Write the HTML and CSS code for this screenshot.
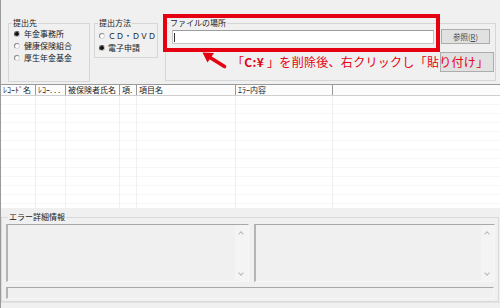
FILE: index.html
```html
<!DOCTYPE html>
<html lang="ja">
<head>
<meta charset="utf-8">
<link rel="stylesheet" href="styles.css">
</head>
<body>
<div class="win">
  <div class="top">
    <fieldset class="grp grp-dest">
      <legend>提出先</legend>
      <div class="opt"><span class="radio on"></span>年金事務所</div>
      <div class="opt"><span class="radio"></span>健康保険組合</div>
      <div class="opt"><span class="radio"></span>厚生年金基金</div>
    </fieldset>
    <fieldset class="grp grp-method">
      <legend>提出方法</legend>
      <div class="opt"><span class="radio"></span>ＣＤ・ＤＶＤ</div>
      <div class="opt"><span class="radio on"></span>電子申請</div>
    </fieldset>
    <fieldset class="grp grp-file">
      <legend>ファイルの場所</legend>
      <div class="file-row">
        <div class="input"><span class="caret"></span></div>
        <div class="btn btn-ref">参照(<u>R</u>)</div>
      </div>
      <div class="btn btn-paste"></div>
    </fieldset>
    <div class="hl-box"></div>
    <svg class="arrow" width="36" height="24" viewBox="0 0 36 24">
      <line x1="28.5" y1="18.5" x2="14" y2="9.5" stroke="#e50012" stroke-width="3.6" stroke-linecap="round"/>
      <polygon points="6.5,4.5 18,5 11.5,14.5" fill="#e50012"/>
    </svg>
    <div class="note">「<b>C:¥</b> 」を削除後、右クリックし「貼り付け」</div>
  </div>

  <div class="table">
    <div class="thead">
      <div class="th">ﾚｺｰﾄﾞ名</div>
      <div class="th">ﾚｺｰ. . .</div>
      <div class="th">被保険者氏名</div>
      <div class="th">項.</div>
      <div class="th">項目名</div>
      <div class="th">ｴﾗｰ内容</div>
      <div class="th last"></div>
    </div>
    <div class="tbody">
      <div class="tc"></div><div class="tc"></div><div class="tc"></div><div class="tc"></div><div class="tc"></div><div class="tc"></div><div class="tc last"></div>
    </div>
  </div>

  <fieldset class="grp grp-err">
    <legend>エラー詳細情報</legend>
    <div class="err-row">
      <div class="tarea ta-left"><div class="sb"><span class="chev up"></span><span class="chev down"></span></div></div>
      <div class="tarea ta-right"><div class="sb"><span class="chev up"></span><span class="chev down"></span></div></div>
    </div>
    <div class="tline"></div>
  </fieldset>
  <div class="status"></div>
</div>
</body>
</html>
```

FILE: styles.css
```css
* { box-sizing: border-box; }
html, body {
  margin: 0;
  padding: 0;
  width: 500px;
  height: 308px;
  overflow: hidden;
  background: #f0f0f0;
}
body {
  font-family: "Noto Sans CJK JP", "Noto Sans", sans-serif;
  font-size: 8px;
  color: #1a1a1a;
}
.win {
  position: relative;
  width: 500px;
  height: 308px;
  border-left: 1px solid #9a9a9a;
  display: flex;
  flex-direction: column;
}
.top {
  height: 84px;
  display: flex;
  align-items: flex-start;
  padding: 18px 0 0 7px;
}
.grp {
  margin: 0;
  padding: 0;
  border: 1px solid #d6d6d6;
  min-width: 0;
}
.grp legend {
  padding: 0 1px;
  margin-left: 3px;
  line-height: 10px;
  height: 10px;
  font-size: 8px;
}
.opt {
  display: flex;
  align-items: center;
  height: 12px;
  line-height: 12px;
  white-space: nowrap;
}
.radio {
  width: 6px;
  height: 6px;
  border-radius: 50%;
  border: 1px solid;
  border-color: #8a8a8a #d8d8d8 #d8d8d8 #8a8a8a;
  background: #fff;
  flex: none;
}
.radio.on {
  background: radial-gradient(circle, #111 0 1.6px, #555 2.2px, #fff 2.6px);
  border-color: #555 #bbb #bbb #555;
}
.grp-dest {
  width: 82px;
  height: 64px;
}
.grp-dest .opt { padding-left: 5px; gap: 4px; }
.grp-method {
  width: 64px;
  height: 40px;
  margin-left: 4px;
  padding-top: 2px;
}
.grp-method .opt { padding-left: 4px; gap: 3px; }
.grp-file {
  width: 331px;
  height: 63px;
  margin-left: 7px;
}
.file-row {
  display: flex;
  align-items: flex-start;
  margin-top: 1px;
  padding-left: 6px;
}
.input {
  width: 262px;
  height: 14px;
  margin-top: 1px;
  background: #fff;
  border: 1px solid #c4c4c4;
  border-top-color: #9c9c9c;
  padding: 2px 0 0 1px;
}
.caret {
  display: block;
  width: 1px;
  height: 9px;
  background: #333;
}
.btn {
  background: #e1e1e1;
  border: 1px solid #adadad;
  color: #4a4a4a;
  text-align: center;
}
.btn-ref {
  width: 49px;
  height: 15px;
  line-height: 13px;
  margin-left: 7px;
  font-size: 7.5px;
}
.btn-ref u { text-decoration-thickness: 0.5px; text-underline-offset: 1px; }
.btn-paste {
  width: 54px;
  height: 20px;
  margin: 8px 0 0 274px;
}
.hl-box {
  position: absolute;
  left: 162px;
  top: 14px;
  width: 277px;
  height: 38px;
  border: 4px solid #e50012;
}
.arrow {
  position: absolute;
  left: 195px;
  top: 48px;
}
.note {
  position: absolute;
  left: 231px;
  top: 54px;
  font-size: 12px;
  line-height: 16px;
  color: #e50012;
  white-space: nowrap;
  letter-spacing: 0.3px;
}
.note b { font-weight: 700; }

.table {
  height: 124px;
  background: #fff;
  border-top: 1px solid #9a9a9a;
  display: flex;
  flex-direction: column;
}
.thead, .tbody {
  display: grid;
  grid-template-columns: 35px 30px 54px 17px 99px 97px 1fr;
}
.thead {
  height: 11px;
  border-bottom: 1px solid #d0d0d0;
  background: #fcfcfc;
}
.th {
  border-right: 1px solid #9a9a9a;
  padding-left: 2px;
  line-height: 10px;
  white-space: nowrap;
  overflow: hidden;
  color: #222;
}
.th.last { border-right: 0; }
.tbody {
  flex: 1;
  background: repeating-linear-gradient(to bottom, #fff 0 8px, #f7f7f7 8px 9px);
}
.tc { border-right: 1px solid #f0f0f0; }
.tc.last { border-right: 0; }

.grp-err {
  margin-top: 4px;
  width: 498px;
  height: 90px;
  padding: 2px 0 0 4px;
  border-color: #dadada;
}
.grp-err legend { margin-left: 2px; }
.err-row {
  display: flex;
  gap: 5px;
}
.tarea {
  position: relative;
  height: 58px;
  background: #f0f0f0;
  border: 1px solid;
  border-width: 1px 1px 1px 2px;
  border-color: #a8a8a8 #f7f7f7 #f7f7f7 #b4b4b4;
}
.ta-left { width: 243px; }
.ta-right { width: 241px; }
.sb {
  position: absolute;
  right: 0;
  top: 0;
  bottom: 0;
  width: 13px;
  background: #f4f4f4;
}
.chev {
  position: absolute;
  left: 4px;
  width: 4px;
  height: 4px;
  border-left: 1px solid #b8b8b8;
  border-top: 1px solid #b8b8b8;
}
.chev.up { top: 7px; transform: rotate(45deg); }
.chev.down { bottom: 6px; transform: rotate(225deg); }
.tline {
  margin-top: 5px;
  width: 488px;
  height: 12px;
  border: 1px solid;
  border-width: 1px 1px 1px 2px;
  border-color: #a8a8a8 #f7f7f7 #f7f7f7 #b4b4b4;
}
.status {
  flex: 1;
  border-top: 1px solid #e2e2e2;
}
```
